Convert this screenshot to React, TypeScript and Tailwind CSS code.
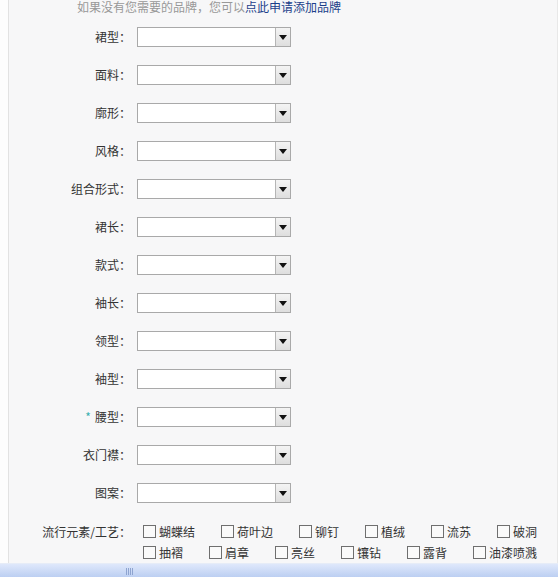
import React from "react";

const fields = ["裙型", "面料", "廓形", "风格", "组合形式", "裙长", "款式", "袖长", "领型", "袖型", "腰型", "衣门襟", "图案"];

const row1 = [
  { t: "蝴蝶结", w: "w-[78px]" },
  { t: "荷叶边", w: "w-[78px]" },
  { t: "铆钉", w: "w-[66px]" },
  { t: "植绒", w: "w-[66px]" },
  { t: "流苏", w: "w-[66px]" },
  { t: "破洞", w: "w-[60px]" },
];
const row2 = ["抽褶", "肩章", "亮丝", "镶钻", "露背", "油漆喷溅"];

function Select() {
  return (
    <div className="flex h-[20px] w-[154px] border border-[#a9a9a9] bg-white">
      <div className="flex-1" />
      <div className="flex w-[15px] items-center justify-center border-l border-[#b5b5b5] bg-gradient-to-b from-[#f4f4f4] to-[#dedede]">
        <svg width="8" height="5" viewBox="0 0 8 5">
          <path d="M0 0 H8 L4 5 Z" fill="#111" />
        </svg>
      </div>
    </div>
  );
}

function Box() {
  return <span className="inline-block h-[13px] w-[13px] border border-[#6f6f6f] bg-[#fafafa]" />;
}

export default function App() {
  return (
    <div
      className="relative flex h-[577px] w-[558px] flex-col overflow-hidden bg-white text-[12px] text-[#333]"
      style={{ fontFamily: '"Noto Sans CJK SC", "Noto Sans", sans-serif' }}
    >
      <div className="flex flex-1">
        <div className="w-[9px] bg-[#fdfdfd]" />
        <div className="w-px bg-[#e2e2e2]" />
        <div className="flex-1 border-r border-[#e8e8e8] bg-[#f7f7f8]">
          <div className="-mt-[2px] h-[18px] pl-[68px] text-[12px] leading-[18px] text-[#999]">
            如果没有您需要的品牌，您可以<span className="text-[#1b3f8a]">点此申请添加品牌</span>
          </div>
          <div className="mt-[11px] flex flex-col gap-[18px]">
            {fields.map((f) => (
              <div key={f} className="flex h-[20px] items-center">
                <div className="w-[122px] text-right leading-[20px]">
                  {f === "腰型" && <span className="mr-[4px] text-[#3bb0b0]">*</span>}
                  {f}：
                </div>
                <div className="ml-[6px]">
                  <Select />
                </div>
              </div>
            ))}
          </div>
          <div className="mt-[18px] flex">
            <div className="w-[122px] text-right leading-[21px]">流行元素/工艺：</div>
            <div className="ml-[12px] flex flex-col">
              <div className="flex h-[21px] items-center">
                {row1.map((c) => (
                  <div key={c.t} className={`flex items-center gap-[3px] ${c.w}`}>
                    <Box />
                    <span className="leading-[21px]">{c.t}</span>
                  </div>
                ))}
              </div>
              <div className="flex h-[21px] items-center">
                {row2.map((c) => (
                  <div key={c} className="flex w-[66px] items-center gap-[3px]">
                    <Box />
                    <span className="leading-[21px]">{c}</span>
                  </div>
                ))}
              </div>
            </div>
          </div>
        </div>
      </div>
      <div className="relative h-[15px] border-t border-[#e6ecf7] bg-gradient-to-b from-[#dfe8fb] to-[#bccff2]">
        <div className="absolute left-[126px] top-[4px] flex gap-[1px]">
          <span className="h-[7px] w-px bg-[#8ea4d0]" />
          <span className="h-[7px] w-px bg-[#8ea4d0]" />
          <span className="h-[7px] w-px bg-[#8ea4d0]" />
          <span className="h-[7px] w-px bg-[#8ea4d0]" />
        </div>
      </div>
    </div>
  );
}
